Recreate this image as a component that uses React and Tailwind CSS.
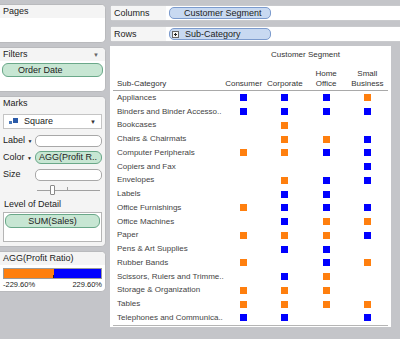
import React from 'react';

const FONT = { fontFamily: '"Liberation Sans", Arial, sans-serif' };

const ROWS = [
  ['Appliances', 'BBBO'],
  ['Binders and Binder Accesso..', 'BBBB'],
  ['Bookcases', '-O--'],
  ['Chairs & Chairmats', '-OOB'],
  ['Computer Peripherals', 'OOBB'],
  ['Copiers and Fax', '---B'],
  ['Envelopes', '-OBB'],
  ['Labels', '-BB-'],
  ['Office Furnishings', 'OBBB'],
  ['Office Machines', '-BOO'],
  ['Paper', 'OOOB'],
  ['Pens & Art Supplies', '-BB-'],
  ['Rubber Bands', 'O-BO'],
  ['Scissors, Rulers and Trimme..', '-BO-'],
  ['Storage & Organization', 'OOO-'],
  ['Tables', 'OOOO'],
  ['Telephones and Communica..', 'BB-B'],
];

const Mark = ({ c }) => {
  if (c === 'B') return <div className="w-[7px] h-[7px] bg-[#0000ff]" />;
  if (c === 'O') return <div className="w-[7px] h-[7px] bg-[#ff7f0e]" />;
  return null;
};

const Card = ({ title, arrow, className, children }) => (
  <div className={`bg-white border-y border-r border-[#b9babd] rounded-r-[5px] overflow-hidden ${className}`}>
    <div className="h-[13px] bg-[#f4f4f4] flex items-center justify-between pl-[3px] pr-[6px] text-[9px] leading-none text-[#222]">
      <span>{title}</span>
      {arrow && <span className="text-[6px] text-[#666]">▼</span>}
    </div>
    {children}
  </div>
);

const Pill = ({ children, className = '' }) => (
  <div className={`h-[14px] rounded-[6px] border border-[#6aa889] bg-[#c7e6d3] flex items-center text-[9px] leading-none text-[#222] ${className}`}>
    {children}
  </div>
);

const Shelf = ({ label, children }) => (
  <div className="h-[16px] flex bg-white rounded-l-[4px] border-y border-l border-[#c9cacd]">
    <div className="w-[55px] bg-[#f5f5f5] flex items-center pl-[3px] text-[9px] text-[#222] leading-none">
      {label}
    </div>
    <div className="flex items-center pl-[3px]">
      <div className="w-[102px] h-[12px] rounded-[5px] border border-[#7c9bcd] bg-[#c8d9f1] flex items-center text-[9px] leading-none text-[#222]">
        {children}
      </div>
    </div>
  </div>
);

export default function App() {
  return (
    <div style={FONT} className="w-[400px] h-[339px] bg-[#c4c5c9] flex gap-[4px] overflow-hidden">
      {/* Left side panels */}
      <div className="w-[106px] flex flex-col gap-[4px] pt-[4px]">
        <Card title="Pages" className="h-[39px]" />

        <Card title="Filters" arrow className="h-[45px]">
          <Pill className="mt-[2px] mx-[2px] pl-[15px]">Order Date</Pill>
        </Card>

        <Card title="Marks" className="h-[151px] !bg-[#f4f4f4]">
          <div className="px-[3px] pt-[4px] flex flex-col">
            <div className="h-[15px] bg-white border border-[#c4c4c4] flex items-center pl-[5px] pr-[5px] text-[9px] text-[#222] leading-none">
              <svg width="9" height="7" viewBox="0 0 9 7">
                <rect x="0" y="3" width="3" height="3" fill="#4a78b8" />
                <rect x="4" y="0" width="5" height="5" fill="#2a5aa8" />
              </svg>
              <span className="ml-[6px]">Square</span>
              <span className="ml-auto text-[6px] text-[#333]">▼</span>
            </div>
            <div className="mt-[5px] flex flex-col gap-[4px] text-[9px] leading-none text-[#222]">
              <div className="flex items-center h-[13px]">
                <span className="w-[32px]">Label <span className="text-[5px]">▼</span></span>
                <div className="flex-1 h-[12px] bg-white border border-[#a8a8a8] rounded-[5px]" />
              </div>
              <div className="flex items-center h-[13px]">
                <span className="w-[32px]">Color <span className="text-[5px]">▼</span></span>
                <Pill className="flex-1 !h-[13px] pl-[3px]">AGG(Profit R..</Pill>
              </div>
              <div className="flex items-center h-[13px]">
                <span className="w-[32px]">Size</span>
                <div className="flex-1 h-[12px] bg-white border border-[#a8a8a8] rounded-[5px]" />
              </div>
            </div>
            {/* size slider */}
            <div className="relative h-[14px] mt-[2px] ml-[34px] mr-[2px] flex items-center">
              <div className="w-full h-px bg-[#a0a0a0]" />
              <div className="absolute left-[30px] top-[4px] w-px h-[3px] bg-[#a0a0a0]" />
              <div className="absolute left-[13px] top-[2px] w-[5px] h-[10px] bg-white border border-[#8a8a8a] rounded-[1px]" />
            </div>
            <div className="mt-[3px] text-[9px] leading-none text-[#222] pl-[1px]">Level of Detail</div>
            <div className="mt-[3px] h-[30px] bg-white border border-[#b5b5b5]">
              <Pill className="m-[1px] justify-center">SUM(Sales)</Pill>
            </div>
          </div>
        </Card>

        <Card title="AGG(Profit Ratio)" className="h-[41px]">
          <div className="px-[3px] pt-[3px]">
            <div className="relative h-[11px] flex border border-[#9a9a9a]">
              <div className="w-[50px] bg-[#ff7f0e]" />
              <div className="flex-1 bg-[#0000ff]" />
              <div className="absolute left-[49px] bottom-0 w-px h-[3px] bg-[#222]" />
            </div>
            <div className="flex justify-between text-[7.5px] leading-none text-[#222] mt-[2px]">
              <span>-229.60%</span>
              <span>229.60%</span>
            </div>
          </div>
        </Card>
      </div>

      {/* Right side: shelves + view */}
      <div className="flex-1 flex flex-col pt-[5px]">
        <Shelf label="Columns">
          <span className="pl-[14px]">Customer Segment</span>
        </Shelf>
        <div className="mt-[5px]">
          <Shelf label="Rows">
            <svg className="ml-[2px]" width="7" height="7" viewBox="0 0 7 7">
              <rect x="0.5" y="0.5" width="6" height="6" fill="#f4f4f4" stroke="#666" />
              <path d="M2 3.5h3M3.5 2v3" stroke="#222" />
            </svg>
            <span className="pl-[6px]">Sub-Category</span>
          </Shelf>
        </div>

        <div className="mt-[4px] w-[281px] h-[281px] bg-white px-[3px] text-[8px] text-[#444] leading-none">
          <div className="h-[24px] pt-[5px] flex">
            <div className="w-[110px]" />
            <div className="flex-1 text-center text-[#333]">Customer Segment</div>
          </div>
          <div className="h-[21px] flex items-end border-b border-[#a9a9a9] pb-[1px] text-[#333]">
            <div className="w-[110px] pl-[4px] leading-[10px]">Sub-Category</div>
            <div className="flex-1 text-center leading-[10px]">Consumer</div>
            <div className="flex-1 text-center leading-[10px]">Corporate</div>
            <div className="flex-1 text-center leading-[10px]">Home<br />Office</div>
            <div className="flex-1 text-center leading-[10px]">Small<br />Business</div>
          </div>
          <div className="border-b border-[#b5b5b5]">
            {ROWS.map(([name, marks]) => (
              <div key={name} className="h-[13.75px] flex items-center">
                <div className="w-[110px] pl-[4px] whitespace-nowrap">{name}</div>
                {marks.split('').map((c, i) => (
                  <div key={i} className="flex-1 flex justify-center">
                    <Mark c={c} />
                  </div>
                ))}
              </div>
            ))}
          </div>
        </div>
      </div>
    </div>
  );
}
